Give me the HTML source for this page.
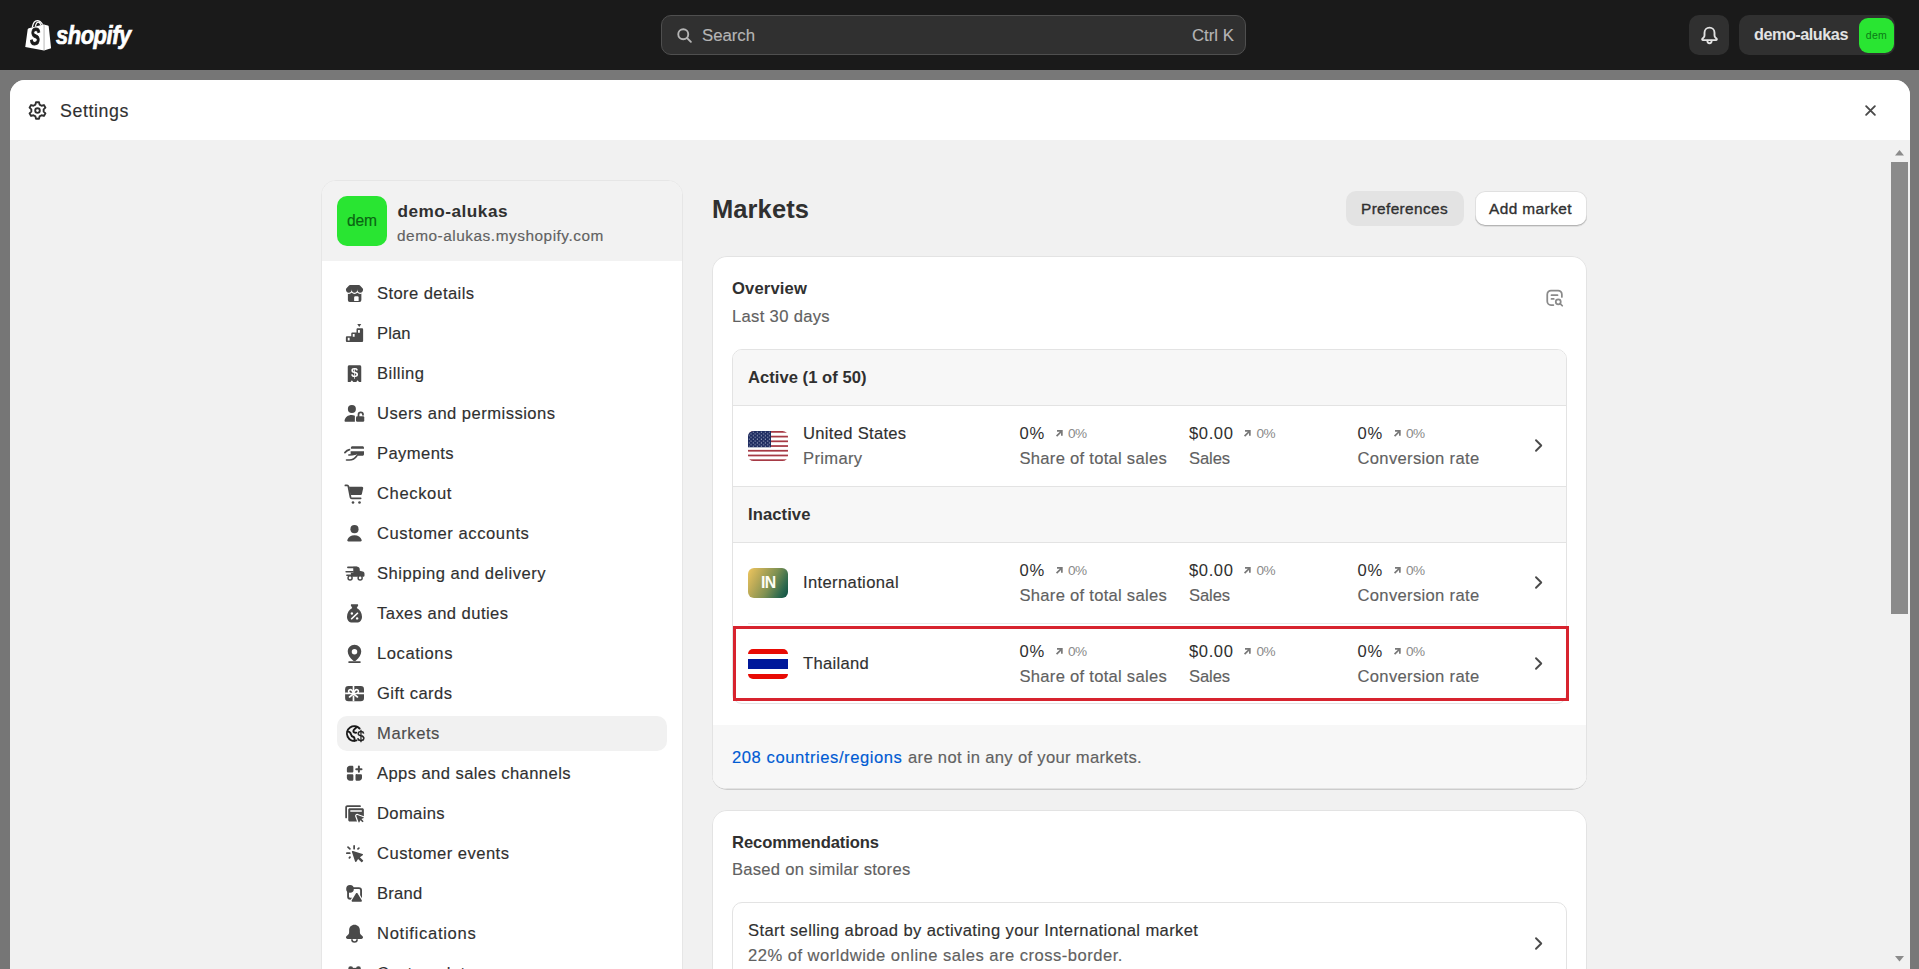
<!DOCTYPE html>
<html lang="en"><head><meta charset="utf-8"><title>Markets · Settings · demo-alukas · Shopify</title>
<style>
html,body{margin:0;padding:0}
body{width:1919px;height:969px;overflow:hidden;position:relative;background:#787878;font-family:"Liberation Sans",sans-serif;-webkit-font-smoothing:antialiased}
.b{position:absolute;box-sizing:border-box}
.t{position:absolute;white-space:nowrap;display:block;margin:0;padding:0;font-weight:400}
svg{position:absolute;display:block;overflow:visible}
a{color:inherit;text-decoration:none}
header,section,nav,main{display:block;margin:0;padding:0}
</style></head>
<body>
<header>
<div class="b" style="left:0px;top:0px;width:1919px;height:70px;background:#1a1a1a"></div>
<div class="b" style="left:0px;top:70px;width:300px;height:10px;background:#767676"></div>
<div class="b" style="left:0px;top:70px;width:10px;height:899px;background:#767676"></div>
<svg viewBox="0 0 28 34" width="28" height="34" style="left:24.500px;top:18.500px;will-change:transform"><path d="M0.250 28.100 L2.700 10.300 C2.800 9.700 3.200 9.300 3.800 9.150 L18.300 5.500 C18.800 5.400 19.300 5.500 19.700 5.800 L22.800 6.400 C23.300 6.500 23.600 6.800 23.700 7.300 L26.100 29.300 L19.050 31.500 Z" fill="#fff"/><path d="M19.050 6.200 V31.400" fill="none" stroke="#9a9a9a" stroke-width=".700"/><path d="M7.300 8.400 C8 4.600 10 1.700 12.200 1.700 C14.400 1.700 16.300 3.300 17.600 5.600" fill="none" stroke="#fff" stroke-width="1.300"/><path d="M10.400 7.600 C10.900 5 12 3.100 13.300 3.100 C14.400 3.100 15.300 4.300 15.900 6.100" fill="none" stroke="#fff" stroke-width="1.200"/><text transform="translate(10.100 26.300) scale(.640 1)" font-size="23" font-weight="700" font-style="italic" text-anchor="middle" fill="#1a1a1a" stroke="#1a1a1a" stroke-width="1" font-family="Liberation Sans,sans-serif">S</text></svg>
<span class="t" style="top:18px;font-size:25px;line-height:35px;color:#fff;left:55.8px;letter-spacing:-0.499px;font-weight:700;font-style:italic;transform:scaleX(0.876);transform-origin:0 0;-webkit-text-stroke:0.7px #fff;">shopify</span>
<div class="b" style="left:661px;top:15px;width:585px;height:40px;background:#303030;border:1px solid #4f4f4f;border-radius:10px"></div>
<svg viewBox="0 0 20 20" width="25" height="25" style="left:671.500px;top:22.500px" fill="none" stroke="#b5b5b5" stroke-width="1.500" stroke-linecap="round"><circle cx="9" cy="9" r="4"/><path d="M12.100 12.100l3 3"/></svg>
<span class="t" style="top:24px;font-size:16.8px;line-height:24px;color:#b5b5b5;left:702px;letter-spacing:-0.039px;-webkit-text-stroke:0.15px #b5b5b5;">Search</span>
<span class="t" style="top:24px;font-size:16.8px;line-height:24px;color:#b5b5b5;left:1192px;letter-spacing:-0.000px;-webkit-text-stroke:0.15px #b5b5b5;">Ctrl K</span>
<div class="b" style="left:1689px;top:15px;width:40px;height:40px;background:#303030;border-radius:10px"></div>
<svg viewBox="0 0 20 20" width="25" height="25" style="left:1696.500px;top:22.500px" fill="none" stroke="#e3e3e3" stroke-width="1.500" stroke-linejoin="round" stroke-linecap="round"><path d="M10 3.700c-2.300 0-4 1.800-4 4.100v2c0 .700-.300 1.400-.800 1.900l-.900.900c-.400.400-.100 1.100.500 1.100h10.400c.600 0 .900-.700.500-1.100l-.900-.900c-.500-.500-.800-1.200-.800-1.900v-2c0-2.300-1.700-4.100-4-4.100z"/><path d="M8.300 14.200c0 1.100.700 2 1.700 2s1.700-.900 1.700-2"/></svg>
<div class="b" style="left:1739px;top:15px;width:156px;height:40px;background:#303030;border-radius:10px"></div>
<span class="t" style="top:23px;font-size:16.2px;line-height:23px;color:#e3e3e3;left:1754px;letter-spacing:-0.458px;font-weight:700;">demo-alukas</span>
<div class="b" style="left:1859px;top:18px;width:35px;height:35px;background:#29e532;border-radius:9px"></div>
<span class="t" style="top:28px;font-size:10.5px;line-height:15px;color:#0c7a16;left:1865.8px;letter-spacing:0.324px;">dem</span>
</header>
<section aria-label="Settings">
<div class="b" style="left:10px;top:80px;width:1900px;height:900px;background:#f1f1f1;border-radius:15px 15px 0 0;overflow:hidden"><div class="b" style="left:0;top:0;width:1900px;height:60px;background:#fff"></div></div>
<svg viewBox="0 0 20 20" width="25" height="25" style="left:24.900px;top:97.900px" fill="none" stroke="#303030" stroke-width="1.500" stroke-linejoin="round"><circle cx="10" cy="10" r="1.850"/><path d="M11.67 5.29 L11.23 3.36 L8.77 3.36 L8.33 5.29 L6.75 6.20 L4.87 5.62 L3.64 7.75 L5.08 9.09 L5.08 10.91 L3.64 12.25 L4.87 14.38 L6.75 13.80 L8.33 14.71 L8.77 16.64 L11.23 16.64 L11.67 14.71 L13.25 13.80 L15.13 14.38 L16.36 12.25 L14.92 10.91 L14.92 9.09 L16.36 7.75 L15.13 5.62 L13.25 6.20Z"/></svg>
<span class="t" style="top:99px;font-size:17.8px;line-height:25px;color:#303030;left:60px;letter-spacing:0.585px;-webkit-text-stroke:0.15px #303030;">Settings</span>
<svg viewBox="0 0 20 20" width="25" height="25" style="left:1858px;top:98px" fill="none" stroke="#4a4a4a" stroke-width="1.500" stroke-linecap="round"><path d="M6.500 6.500l7 7M13.500 6.500l-7 7"/></svg>
<div class="b" style="left:1891px;top:162px;width:17px;height:452px;background:#8b8b8b"></div>
<svg viewBox="0 0 10 6" width="9" height="5.400" style="left:1895px;top:149.800px" fill="#8b8b8b"><path d="M0 6L5 0 10 6z"/></svg>
<svg viewBox="0 0 10 6" width="9" height="5.400" style="left:1895px;top:955.800px" fill="#8b8b8b"><path d="M0 0L5 6 10 0z"/></svg>
<nav aria-label="Settings navigation">
<div class="b" style="left:321px;top:180px;width:362px;height:800px;background:#fff;border:1px solid #e6e6e6;border-radius:15px 15px 0 0;overflow:hidden"><div class="b" style="left:0;top:0;width:360px;height:80px;background:#f2f2f2"></div></div>
<div class="b" style="left:337px;top:196px;width:50px;height:50px;background:#29e532;border-radius:10px"></div>
<span class="t" style="top:210px;font-size:15.6px;line-height:22px;color:#0b6412;left:347px;letter-spacing:-0.116px;-webkit-text-stroke:0.15px #0b6412;">dem</span>
<span class="t" style="top:199px;font-size:17.2px;line-height:24px;color:#303030;left:397.5px;letter-spacing:0.495px;font-weight:700;">demo-alukas</span>
<span class="t" style="top:225px;font-size:15.4px;line-height:22px;color:#616161;left:397px;letter-spacing:0.520px;-webkit-text-stroke:0.15px #616161;">demo-alukas.myshopify.com</span>
<svg viewBox="0 0 20 20" width="25" height="25" style="left:342.0px;top:281.0px" fill="#4a4a4a"><path d="M4.700 8.500h10.800v6.700a1.500 1.500 0 0 1-1.500 1.500h-7.800a1.500 1.500 0 0 1-1.500-1.500z"/><path d="M9.700 16v-2.900a1 1 0 0 1 1-1h1.600a1 1 0 0 1 1 1v2.900z" fill="#fff"/><path stroke="#fff" stroke-width="2" paint-order="stroke" d="M7 3.200h6c.800 0 1.500.400 1.950 1.050l1.650 1.800c.150.250.250.400.250.600a2.283 2.750 0 0 1-4.567 0a2.283 2.750 0 0 1-4.567 0a2.283 2.750 0 0 1-4.567 0c0-.200.100-.350.250-.600l1.650-1.800c.450-.650 1.150-1.050 1.950-1.050z"/></svg>
<a href="#" class="t" style="top:282px;font-size:16.6px;line-height:23px;color:#303030;left:377px;letter-spacing:0.402px;-webkit-text-stroke:0.15px #303030;">Store details</a>
<svg viewBox="0 0 20 20" width="25" height="25" style="left:342.0px;top:321.0px" fill="#4a4a4a"><path d="M12.200 2.300h3.200l-1.600 2.400z"/><path fill-rule="evenodd" d="M12.600 5.700h3.300c.550 0 1 .450 1 1v9c0 .550-.450 1-1 1h-11.800c-.550 0-1-.450-1-1v-2.600c0-.550.450-1 1-1h3.300v-2c0-.550.450-1 1-1h3.200v-2.400c0-.550.450-1 1-1zM4.600 13.300v2.200h1.500v-2.200zM8.600 10.400v2.200h1.500v-2.200zM12.800 7.200v2.200h1.500v-2.200z"/></svg>
<a href="#" class="t" style="top:322px;font-size:16.6px;line-height:23px;color:#303030;left:377px;letter-spacing:0.069px;-webkit-text-stroke:0.15px #303030;">Plan</a>
<svg viewBox="0 0 20 20" width="25" height="25" style="left:342.0px;top:361.0px;will-change:transform" fill="#4a4a4a"><path d="M5.800 3.300h8.400c.660 0 1.200.540 1.200 1.200v11.900c0 .300-.200.450-.450.450h-.900c-.250 0-.450-.100-.600-.300l-.950-1.250-.950 1.250c-.150.200-.350.300-.600.300h-1.500c-.250 0-.450-.100-.600-.300l-.950-1.250-.950 1.250c-.150.200-.350.300-.600.300h-1.300c-.250 0-.450-.150-.450-.450v-11.900c0-.660.540-1.200 1.200-1.200z"/><text x="10" y="12.900" font-size="10.400" font-weight="700" text-anchor="middle" fill="#fff" font-family="Liberation Sans,sans-serif">$</text></svg>
<a href="#" class="t" style="top:362px;font-size:16.6px;line-height:23px;color:#303030;left:377px;letter-spacing:0.458px;-webkit-text-stroke:0.15px #303030;">Billing</a>
<svg viewBox="0 0 20 20" width="25" height="25" style="left:342.0px;top:401.0px" fill="#4a4a4a"><circle cx="7.900" cy="6.300" r="3.200"/><path d="M2.050 15.500c.500-2.600 2.700-4.300 5.600-4.300.950 0 1.850.200 2.650.550v4.850h-7.300c-.650 0-1.100-.500-.950-1.100z"/><rect x="11.200" y="12.100" width="6.600" height="4.500" rx="1"/><path d="M13.200 12.300v-1.400c0-1 .800-1.850 1.800-1.850s1.800.800 1.800 1.800v.200" fill="none" stroke="#4a4a4a" stroke-width="1.400" stroke-linecap="round"/></svg>
<a href="#" class="t" style="top:402px;font-size:16.6px;line-height:23px;color:#303030;left:377px;letter-spacing:0.460px;-webkit-text-stroke:0.15px #303030;">Users and permissions</a>
<svg viewBox="0 0 20 20" width="25" height="25" style="left:342.0px;top:441.0px" fill="#4a4a4a"><path d="M8.300 4.200h8.100c.660 0 1.200.540 1.200 1.200v.800h-10.500v-.800c0-.660.540-1.200 1.200-1.200z"/><path d="M6.900 8.200h10.700v2.400c0 .660-.540 1.200-1.200 1.200h-4.600l.300-1.300h-4.100l-1.100.100z"/><path d="M2.300 9.300c1.100-1.300 2.300-2.100 3.700-2.400" fill="none" stroke="#4a4a4a" stroke-linecap="round" stroke-linejoin="round" stroke-width="1.300"/><path d="M5.500 11.200c2-.100 3.900-.400 5.700-.800" fill="none" stroke="#4a4a4a" stroke-linecap="round" stroke-linejoin="round" stroke-width="1.300"/><path d="M3.600 15.200h2.300c2.700 0 4.500-1.200 6-3.400" fill="none" stroke="#4a4a4a" stroke-linecap="round" stroke-linejoin="round" stroke-width="1.300"/></svg>
<a href="#" class="t" style="top:442px;font-size:16.6px;line-height:23px;color:#303030;left:377px;letter-spacing:0.399px;-webkit-text-stroke:0.15px #303030;">Payments</a>
<svg viewBox="0 0 20 20" width="25" height="25" style="left:342.0px;top:481.0px" fill="#4a4a4a"><path d="M2.700 3.500h1.400c.500 0 .900.350 1 .800l1.700 8.700c.100.450.500.800 1 .800h7.100" fill="none" stroke="#4a4a4a" stroke-linecap="round" stroke-linejoin="round" stroke-width="1.400"/><path d="M5.600 4.600h10.400c.650 0 1.100.600.950 1.200l-1.050 4.500c-.130.530-.600.900-1.150.900h-7.950z"/><circle cx="8.800" cy="17.200" r="1.050"/><circle cx="14" cy="17.200" r="1.050"/></svg>
<a href="#" class="t" style="top:482px;font-size:16.6px;line-height:23px;color:#303030;left:377px;letter-spacing:0.609px;-webkit-text-stroke:0.15px #303030;">Checkout</a>
<svg viewBox="0 0 20 20" width="25" height="25" style="left:342.0px;top:521.0px" fill="#4a4a4a"><circle cx="10" cy="6.500" r="3.250"/><path d="M4.250 15.200c.700-2.300 3-3.800 5.750-3.800s5.050 1.500 5.750 3.800c.180.600-.270 1.100-.900 1.100h-9.700c-.630 0-1.080-.500-.900-1.100z"/></svg>
<a href="#" class="t" style="top:522px;font-size:16.6px;line-height:23px;color:#303030;left:377px;letter-spacing:0.558px;-webkit-text-stroke:0.15px #303030;">Customer accounts</a>
<svg viewBox="0 0 20 20" width="25" height="25" style="left:342.0px;top:561.0px" fill="#4a4a4a"><path d="M9 4.500h3.300c1.100 0 1.900.900 1.900 2v1.200l2.400.700c.850.250 1.400.950 1.400 1.800v1.300c0 .550-.450 1-1 1h-9.900v-3.200h1.900z"/><path d="M4.700 5.100h7M3.300 8.600h5.500M3.900 11.400h3.500" fill="none" stroke="#4a4a4a" stroke-linecap="round" stroke-linejoin="round" stroke-width="1.300"/><circle cx="6.450" cy="13.500" r="2.200"/><circle cx="6.450" cy="13.500" r="1.050" fill="#fff"/><circle cx="14.500" cy="13.500" r="2.200"/><circle cx="14.500" cy="13.500" r="1.050" fill="#fff"/></svg>
<a href="#" class="t" style="top:562px;font-size:16.6px;line-height:23px;color:#303030;left:377px;letter-spacing:0.489px;-webkit-text-stroke:0.15px #303030;">Shipping and delivery</a>
<svg viewBox="0 0 20 20" width="25" height="25" style="left:342.0px;top:601.0px" fill="#4a4a4a"><path d="M7.700 2.600h4.600c.500 0 .800.500.600.950l-1.100 2.100c2.500 1.400 4.200 4 4.200 6.850 0 2.750-1.600 4.700-4.300 4.700h-3.400c-2.700 0-4.300-1.950-4.300-4.700 0-2.850 1.700-5.450 4.200-6.850l-1.100-2.100c-.200-.450.100-.950.600-.950z"/><path d="M7.600 14.300l4.900-4.600" stroke="#fff" stroke-width="1.100" stroke-linecap="round" fill="none"/><circle cx="7.900" cy="10" r=".950" fill="#fff"/><circle cx="12.100" cy="13.900" r=".950" fill="#fff"/></svg>
<a href="#" class="t" style="top:602px;font-size:16.6px;line-height:23px;color:#303030;left:377px;letter-spacing:0.432px;-webkit-text-stroke:0.15px #303030;">Taxes and duties</a>
<svg viewBox="0 0 20 20" width="25" height="25" style="left:342.0px;top:641.0px" fill="#4a4a4a"><path fill-rule="evenodd" d="M10 2.900c3.050 0 5.400 2.400 5.400 5.400 0 2.500-1.700 5.100-4.400 7.400-.600.500-1.400.500-2 0-2.700-2.300-4.400-4.900-4.400-7.400 0-3 2.350-5.400 5.400-5.400zM10 6.300a2.200 2.200 0 1 0 0 4.400 2.200 2.200 0 0 0 0-4.400z"/><path d="M5.700 16.850h8.600" stroke="#4a4a4a" stroke-width="1.500" stroke-linecap="round" fill="none"/></svg>
<a href="#" class="t" style="top:642px;font-size:16.6px;line-height:23px;color:#303030;left:377px;letter-spacing:0.549px;-webkit-text-stroke:0.15px #303030;">Locations</a>
<svg viewBox="0 0 20 20" width="25" height="25" style="left:342.0px;top:681.0px" fill="#4a4a4a"><rect x="2.500" y="4" width="15.100" height="12.100" rx="2.600"/><path d="M2.500 9.850H6.200M12.200 9.850H17.600M9.200 4V8M9.200 11.500V16.100" stroke="#fff" stroke-width="1.350" fill="none"/><path d="M9.200 10C8.600 7.600 7.300 6.600 6.200 7C5.100 7.400 4.900 8.800 6 9.600C6.900 10.200 8.200 10.200 9.200 10ZM9.200 10C9.800 7.600 11.100 6.600 12.200 7C13.300 7.400 13.500 8.800 12.400 9.600C11.500 10.200 10.200 10.200 9.200 10Z" stroke="#fff" stroke-width="1.300" fill="#4a4a4a" stroke-linejoin="round"/><path d="M9.200 10.300l-3.200 2.500M9.200 10.300l3.200 2.500" stroke="#fff" stroke-width="1.300" fill="none" stroke-linecap="round"/></svg>
<a href="#" class="t" style="top:682px;font-size:16.6px;line-height:23px;color:#303030;left:377px;letter-spacing:0.447px;-webkit-text-stroke:0.15px #303030;">Gift cards</a>
<div class="b" style="left:337px;top:716px;width:330px;height:35px;background:#f1f1f1;border-radius:10px"></div>
<svg viewBox="0 0 20 20" width="25" height="25" style="left:342.0px;top:721.0px;will-change:transform" fill="#303030"><path d="M14.080 6.010A5.850 5.850 0 1 0 11.610 15.560" fill="none" stroke="#1a1a1a" stroke-width="1.550" stroke-linecap="round"/><path d="M4.600 8.300c1.400.300 2.300 1 2.500 2.200.200 1.300.900 1.900 2.100 2.300.800.300 1 1.200.800 3" fill="none" stroke="#1a1a1a" stroke-width="1.550" stroke-linecap="round" stroke-linejoin="round"/><path d="M11.800 4.700c-.900 1.300-2.600 2.100-2.700 3.300-.100 1 1 1.500 2.300 1.300" fill="none" stroke="#1a1a1a" stroke-width="1.550" stroke-linecap="round" stroke-linejoin="round"/><text transform="translate(15.050 15.600) scale(.900 1)" font-size="11.600" font-weight="400" text-anchor="middle" fill="#1a1a1a" stroke="#1a1a1a" stroke-width=".300" font-family="Liberation Sans,sans-serif">$</text></svg>
<a href="#" class="t" style="top:722px;font-size:16.6px;line-height:23px;color:#4d4d4d;left:377px;letter-spacing:0.567px;-webkit-text-stroke:0.15px #4d4d4d;">Markets</a>
<svg viewBox="0 0 20 20" width="25" height="25" style="left:342.0px;top:761.0px" fill="#4a4a4a"><path d="M6.300 3.700h1.800c.550 0 1 .450 1 1v3.400c0 .550-.450 1-1 1h-3.200c-.550 0-1-.450-1-1v-2c0-1.330 1.070-2.400 2.400-2.400z"/><path d="M4.900 10.500h3.200c.550 0 1 .450 1 1v3.300c0 .550-.450 1-1 1h-1.800c-1.330 0-2.400-1.070-2.400-2.400v-1.900c0-.550.450-1 1-1z"/><path d="M11.800 10.500h3.200c.550 0 1 .450 1 1v1.900c0 1.330-1.070 2.400-2.400 2.400h-1.800c-.550 0-1-.450-1-1v-3.300c0-.550.450-1 1-1z"/><path d="M13.500 4.400v4.200M11.400 6.500h4.200" stroke="#4a4a4a" stroke-width="1.600" stroke-linecap="round" fill="none"/></svg>
<a href="#" class="t" style="top:762px;font-size:16.6px;line-height:23px;color:#303030;left:377px;letter-spacing:0.410px;-webkit-text-stroke:0.15px #303030;">Apps and sales channels</a>
<svg viewBox="0 0 20 20" width="25" height="25" style="left:342.0px;top:801.0px" fill="#4a4a4a"><path d="M3.300 13.100v-8c0-.550.450-1 1-1h10.100" fill="none" stroke="#4a4a4a" stroke-linecap="round" stroke-linejoin="round" stroke-width="1.400"/><path fill-rule="evenodd" d="M6.200 5.700h10.100c.660 0 1.200.540 1.200 1.200v9.500h-11.300c-.660 0-1.200-.540-1.200-1.200v-8.300c0-.660.540-1.200 1.200-1.200zM7 7.400c-.300 0-.500.250-.500.600s.200.600.500.600h8.500c.300 0 .500-.250.500-.600s-.200-.600-.500-.600z"/><path stroke="#fff" stroke-width="1.900" paint-order="stroke" stroke-linejoin="round" d="M12.250 11.200l5 1.800c.300.100.300.500.050.650l-1.700.800 1.700 1.700-.900.900-1.700-1.700-.800 1.700c-.150.300-.550.250-.650-.050l-1.800-5c-.150-.450.300-.900.800-.800z"/></svg>
<a href="#" class="t" style="top:802px;font-size:16.6px;line-height:23px;color:#303030;left:377px;letter-spacing:0.357px;-webkit-text-stroke:0.15px #303030;">Domains</a>
<svg viewBox="0 0 20 20" width="25" height="25" style="left:342.0px;top:841.0px" fill="#4a4a4a"><path d="M8.850 7.950L16.450 10.450C16.900 10.600 16.950 11.200 16.550 11.450L14.300 12.900L16.800 15.400C17 15.600 17 15.900 16.800 16.100L16.100 16.800C15.900 17 15.600 17 15.400 16.800L12.900 14.300L11.450 16.550C11.200 16.950 10.600 16.900 10.450 16.450L7.950 8.850C7.750 8.250 8.250 7.750 8.850 7.950Z"/><path d="M9.700 3.900v2.200M3.900 9.700h2.300M4.800 4.900l1.500 1.400M13.500 5.700l-.700.600M6.400 12.900l-.500.600" fill="none" stroke="#4a4a4a" stroke-linecap="round" stroke-linejoin="round" stroke-width="1.400"/></svg>
<a href="#" class="t" style="top:842px;font-size:16.6px;line-height:23px;color:#303030;left:377px;letter-spacing:0.468px;-webkit-text-stroke:0.15px #303030;">Customer events</a>
<svg viewBox="0 0 20 20" width="25" height="25" style="left:342.0px;top:881.0px" fill="#4a4a4a"><rect x="4.850" y="5.650" width="10.400" height="8.500" rx="1.800" fill="none" stroke="#4a4a4a" stroke-width="1.500"/><circle cx="6.400" cy="6.300" r="3.050"/><path stroke="#fff" stroke-width="1.900" paint-order="stroke" stroke-linejoin="round" d="M11.100 9.900c.300-.500 1.100-.500 1.400 0l3.300 5.500c.350.550-.050 1.250-.700 1.250h-6.600c-.650 0-1.050-.700-.700-1.250z"/></svg>
<a href="#" class="t" style="top:882px;font-size:16.6px;line-height:23px;color:#303030;left:377px;letter-spacing:0.240px;-webkit-text-stroke:0.15px #303030;">Brand</a>
<svg viewBox="0 0 20 20" width="25" height="25" style="left:342.0px;top:921.0px" fill="#4a4a4a"><path d="M10 3c2.500 0 4.300 1.900 4.300 4.300v1.600c0 .800.300 1.500.850 2.050l1.300 1.300c.800.800.250 2.100-.850 2.100h-11.200c-1.100 0-1.650-1.300-.850-2.100l1.300-1.300c.550-.550.850-1.250.850-2.050v-1.600c0-2.400 1.800-4.300 4.300-4.300z"/><path d="M7.900 14.600c0 1.200.900 2.150 2.100 2.150s2.100-.950 2.100-2.150" fill="none" stroke="#4a4a4a" stroke-width="1.300"/></svg>
<a href="#" class="t" style="top:922px;font-size:16.6px;line-height:23px;color:#303030;left:377px;letter-spacing:0.699px;-webkit-text-stroke:0.15px #303030;">Notifications</a>
<svg viewBox="0 0 20 20" width="25" height="25" style="left:342.0px;top:961.0px" fill="#4a4a4a"><rect x="5" y="4.200" width="3.900" height="5" rx="1.900"/><rect x="11.200" y="4.200" width="3.900" height="5" rx="1.900"/><rect x="8" y="5.500" width="4" height="3.500"/><rect x="5" y="11" width="3.900" height="5" rx="1.900"/><rect x="11.200" y="11" width="3.900" height="5" rx="1.900"/></svg>
<a href="#" class="t" style="top:962px;font-size:16.6px;line-height:23px;color:#303030;left:377px;letter-spacing:0.353px;-webkit-text-stroke:0.15px #303030;">Custom data</a>
</nav>
<main>
<h1 class="t" style="top:191px;font-size:25.5px;line-height:36px;color:#303030;left:712px;letter-spacing:0.087px;font-weight:700;">Markets</h1>
<div class="b" style="left:1346px;top:191px;width:118px;height:35px;background:#e3e3e3;border-radius:10px"></div>
<span class="t" style="top:198px;font-size:15.4px;line-height:22px;color:#303030;left:1361px;letter-spacing:0.361px;-webkit-text-stroke:0.35px #303030;">Preferences</span>
<div class="b" style="left:1475px;top:191px;width:112px;height:35px;background:#fff;border-radius:10px;box-shadow:inset 0 -1px 0 #b5b5b5,inset 0 0 0 1px #e0e0e0,0 1px 0 rgba(0,0,0,.08)"></div>
<span class="t" style="top:198px;font-size:15.4px;line-height:22px;color:#303030;left:1489px;letter-spacing:0.425px;-webkit-text-stroke:0.35px #303030;">Add market</span>
<div class="b" style="left:712px;top:256px;width:875px;height:533px;background:#fff;border-radius:15px;box-shadow:0 1px 0 0 #cccccc,0 0 0 1px #e3e3e3 inset;overflow:hidden"><div class="b" style="left:1px;top:469px;width:873px;height:63px;background:#f7f7f7"></div></div>
<h2 class="t" style="top:277px;font-size:16.6px;line-height:23px;color:#303030;left:732px;letter-spacing:0.147px;font-weight:700;">Overview</h2>
<span class="t" style="top:305px;font-size:16.6px;line-height:23px;color:#616161;left:732px;letter-spacing:0.323px;-webkit-text-stroke:0.15px #616161;">Last 30 days</span>
<svg viewBox="0 0 20 20" width="25" height="25" style="left:1542px;top:285px" fill="none" stroke="#8a8a8a" stroke-width="1.400" stroke-linecap="round" stroke-linejoin="round"><path d="M15.900 9.500V7.500a3 3 0 0 0-3-3H7.200a3 3 0 0 0-3 3V13a3 3 0 0 0 3 3H9.100"/><path d="M7.600 8.100H12.400M7.600 11.100H9.400"/><circle cx="13" cy="13.400" r="2"/><path d="M14.500 14.900l1.700 1.700"/></svg>
<div class="b" style="left:732px;top:349px;width:835px;height:355px;border:1px solid #e3e3e3;border-radius:10px;background:#fff;overflow:hidden"><div class="b" style="left:0;top:0;width:833px;height:56px;background:#f7f7f7;border-bottom:1px solid #e3e3e3"></div><div class="b" style="left:0;top:136px;width:833px;height:57px;background:#f7f7f7;border-top:1px solid #e3e3e3;border-bottom:1px solid #e3e3e3"></div><div class="b" style="left:15px;top:273px;width:803px;height:1px;background:#ebebeb"></div></div>
<span class="t" style="top:366px;font-size:16.6px;line-height:23px;color:#303030;left:748px;letter-spacing:0.026px;font-weight:700;">Active (1 of 50)</span>
<span class="t" style="top:503px;font-size:16.6px;line-height:23px;color:#303030;left:748px;letter-spacing:0.085px;font-weight:700;">Inactive</span>
<svg viewBox="0 0 40 30" width="40" height="30" style="left:748px;top:431px"><defs><clipPath id="fc"><rect width="40" height="30" rx="5.500"/></clipPath><pattern id="st" width="4.100" height="3.600" patternUnits="userSpaceOnUse"><circle cx="1.100" cy=".950" r=".600" fill="#dfe3f3"/><circle cx="3.150" cy="2.750" r=".600" fill="#dfe3f3"/></pattern></defs><g clip-path="url(#fc)"><rect width="40" height="30" fill="#fff"/><rect y="0.000" width="40" height="1.750" fill="#a63a45"/><rect y="4.720" width="40" height="1.750" fill="#a63a45"/><rect y="9.440" width="40" height="1.750" fill="#a63a45"/><rect y="14.160" width="40" height="1.750" fill="#a63a45"/><rect y="18.880" width="40" height="1.750" fill="#a63a45"/><rect y="23.600" width="40" height="1.750" fill="#a63a45"/><rect y="28.320" width="40" height="1.750" fill="#a63a45"/><rect width="23" height="16.300" fill="#1d2b5f"/><rect x=".600" y=".500" width="22" height="15.400" fill="url(#st)"/></g></svg>
<span class="t" style="top:422px;font-size:16.6px;line-height:23px;color:#303030;left:803px;letter-spacing:0.296px;-webkit-text-stroke:0.15px #303030;">United States</span>
<span class="t" style="top:447px;font-size:16.6px;line-height:23px;color:#616161;left:803px;letter-spacing:0.332px;-webkit-text-stroke:0.15px #616161;">Primary</span>
<span class="t" style="top:422px;font-size:16.6px;line-height:23px;color:#303030;left:1019.5px;letter-spacing:0.754px;-webkit-text-stroke:0.01px #303030;">0%</span>
<svg viewBox="0 0 10 10" width="8.800" height="8.800" style="left:1054.8px;top:429.1px" fill="none" stroke="#787878" stroke-width="1.900"><path d="M2.300 2.200h5.500v5.500M7.600 2.400L1.800 8.200"/></svg>
<span class="t" style="top:424px;font-size:13.6px;line-height:19px;color:#8a8a8a;left:1068.0px;letter-spacing:-0.528px;">0%</span>
<span class="t" style="top:447px;font-size:16.6px;line-height:23px;color:#616161;left:1019.5px;letter-spacing:0.270px;-webkit-text-stroke:0.15px #616161;">Share of total sales</span>
<span class="t" style="top:422px;font-size:16.6px;line-height:23px;color:#303030;left:1189px;letter-spacing:0.592px;-webkit-text-stroke:0.01px #303030;">$0.00</span>
<svg viewBox="0 0 10 10" width="8.800" height="8.800" style="left:1243.3px;top:429.1px" fill="none" stroke="#787878" stroke-width="1.900"><path d="M2.300 2.200h5.500v5.500M7.600 2.400L1.800 8.200"/></svg>
<span class="t" style="top:424px;font-size:13.6px;line-height:19px;color:#8a8a8a;left:1256.5px;letter-spacing:-0.528px;">0%</span>
<span class="t" style="top:447px;font-size:16.6px;line-height:23px;color:#616161;left:1189px;letter-spacing:-0.105px;-webkit-text-stroke:0.15px #616161;">Sales</span>
<span class="t" style="top:422px;font-size:16.6px;line-height:23px;color:#303030;left:1357.5px;letter-spacing:0.754px;-webkit-text-stroke:0.01px #303030;">0%</span>
<svg viewBox="0 0 10 10" width="8.800" height="8.800" style="left:1392.8px;top:429.1px" fill="none" stroke="#787878" stroke-width="1.900"><path d="M2.300 2.200h5.500v5.500M7.600 2.400L1.800 8.200"/></svg>
<span class="t" style="top:424px;font-size:13.6px;line-height:19px;color:#8a8a8a;left:1406.0px;letter-spacing:-0.528px;">0%</span>
<span class="t" style="top:447px;font-size:16.6px;line-height:23px;color:#616161;left:1357.5px;letter-spacing:0.321px;-webkit-text-stroke:0.15px #616161;">Conversion rate</span>
<svg viewBox="0 0 20 20" width="25" height="25" style="left:1526px;top:433px" fill="none" stroke="#4a4a4a" stroke-width="1.500" stroke-linecap="round" stroke-linejoin="round"><path d="M8 5.800l4.200 4.200-4.200 4.200"/></svg>
<div class="b" style="left:748px;top:568px;width:40px;height:30px;background:linear-gradient(118deg,#efc65e 0%,#b9a957 28%,#7f9152 55%,#2f6a4e 82%,#0b4f44 100%);border-radius:6px"></div>
<span class="t" style="top:572px;font-size:15.8px;line-height:22px;color:#fdfdf5;left:761px;letter-spacing:-0.750px;font-weight:700;">IN</span>
<span class="t" style="top:571px;font-size:16.6px;line-height:23px;color:#303030;left:803px;letter-spacing:0.356px;-webkit-text-stroke:0.15px #303030;">International</span>
<span class="t" style="top:559px;font-size:16.6px;line-height:23px;color:#303030;left:1019.5px;letter-spacing:0.754px;-webkit-text-stroke:0.01px #303030;">0%</span>
<svg viewBox="0 0 10 10" width="8.800" height="8.800" style="left:1054.8px;top:566.1px" fill="none" stroke="#787878" stroke-width="1.900"><path d="M2.300 2.200h5.500v5.500M7.600 2.400L1.800 8.200"/></svg>
<span class="t" style="top:561px;font-size:13.6px;line-height:19px;color:#8a8a8a;left:1068.0px;letter-spacing:-0.528px;">0%</span>
<span class="t" style="top:584px;font-size:16.6px;line-height:23px;color:#616161;left:1019.5px;letter-spacing:0.270px;-webkit-text-stroke:0.15px #616161;">Share of total sales</span>
<span class="t" style="top:559px;font-size:16.6px;line-height:23px;color:#303030;left:1189px;letter-spacing:0.592px;-webkit-text-stroke:0.01px #303030;">$0.00</span>
<svg viewBox="0 0 10 10" width="8.800" height="8.800" style="left:1243.3px;top:566.1px" fill="none" stroke="#787878" stroke-width="1.900"><path d="M2.300 2.200h5.500v5.500M7.600 2.400L1.800 8.200"/></svg>
<span class="t" style="top:561px;font-size:13.6px;line-height:19px;color:#8a8a8a;left:1256.5px;letter-spacing:-0.528px;">0%</span>
<span class="t" style="top:584px;font-size:16.6px;line-height:23px;color:#616161;left:1189px;letter-spacing:-0.105px;-webkit-text-stroke:0.15px #616161;">Sales</span>
<span class="t" style="top:559px;font-size:16.6px;line-height:23px;color:#303030;left:1357.5px;letter-spacing:0.754px;-webkit-text-stroke:0.01px #303030;">0%</span>
<svg viewBox="0 0 10 10" width="8.800" height="8.800" style="left:1392.8px;top:566.1px" fill="none" stroke="#787878" stroke-width="1.900"><path d="M2.300 2.200h5.500v5.500M7.600 2.400L1.800 8.200"/></svg>
<span class="t" style="top:561px;font-size:13.6px;line-height:19px;color:#8a8a8a;left:1406.0px;letter-spacing:-0.528px;">0%</span>
<span class="t" style="top:584px;font-size:16.6px;line-height:23px;color:#616161;left:1357.5px;letter-spacing:0.321px;-webkit-text-stroke:0.15px #616161;">Conversion rate</span>
<svg viewBox="0 0 20 20" width="25" height="25" style="left:1526px;top:570px" fill="none" stroke="#4a4a4a" stroke-width="1.500" stroke-linecap="round" stroke-linejoin="round"><path d="M8 5.800l4.200 4.200-4.200 4.200"/></svg>
<svg viewBox="0 0 40 30" width="40" height="30" style="left:748px;top:649px"><defs><clipPath id="ft"><rect width="40" height="30" rx="5"/></clipPath></defs><g clip-path="url(#ft)"><rect width="40" height="30" fill="#fff"/><rect width="40" height="5" fill="#e80a04"/><rect y="25" width="40" height="5" fill="#e80a04"/><rect y="10" width="40" height="10" fill="#00189a"/></g></svg>
<span class="t" style="top:652px;font-size:16.6px;line-height:23px;color:#303030;left:803px;letter-spacing:0.290px;-webkit-text-stroke:0.15px #303030;">Thailand</span>
<span class="t" style="top:640px;font-size:16.6px;line-height:23px;color:#303030;left:1019.5px;letter-spacing:0.754px;-webkit-text-stroke:0.01px #303030;">0%</span>
<svg viewBox="0 0 10 10" width="8.800" height="8.800" style="left:1054.8px;top:647.1px" fill="none" stroke="#787878" stroke-width="1.900"><path d="M2.300 2.200h5.500v5.500M7.600 2.400L1.800 8.200"/></svg>
<span class="t" style="top:642px;font-size:13.6px;line-height:19px;color:#8a8a8a;left:1068.0px;letter-spacing:-0.528px;">0%</span>
<span class="t" style="top:665px;font-size:16.6px;line-height:23px;color:#616161;left:1019.5px;letter-spacing:0.270px;-webkit-text-stroke:0.15px #616161;">Share of total sales</span>
<span class="t" style="top:640px;font-size:16.6px;line-height:23px;color:#303030;left:1189px;letter-spacing:0.592px;-webkit-text-stroke:0.01px #303030;">$0.00</span>
<svg viewBox="0 0 10 10" width="8.800" height="8.800" style="left:1243.3px;top:647.1px" fill="none" stroke="#787878" stroke-width="1.900"><path d="M2.300 2.200h5.500v5.500M7.600 2.400L1.800 8.200"/></svg>
<span class="t" style="top:642px;font-size:13.6px;line-height:19px;color:#8a8a8a;left:1256.5px;letter-spacing:-0.528px;">0%</span>
<span class="t" style="top:665px;font-size:16.6px;line-height:23px;color:#616161;left:1189px;letter-spacing:-0.105px;-webkit-text-stroke:0.15px #616161;">Sales</span>
<span class="t" style="top:640px;font-size:16.6px;line-height:23px;color:#303030;left:1357.5px;letter-spacing:0.754px;-webkit-text-stroke:0.01px #303030;">0%</span>
<svg viewBox="0 0 10 10" width="8.800" height="8.800" style="left:1392.8px;top:647.1px" fill="none" stroke="#787878" stroke-width="1.900"><path d="M2.300 2.200h5.500v5.500M7.600 2.400L1.800 8.200"/></svg>
<span class="t" style="top:642px;font-size:13.6px;line-height:19px;color:#8a8a8a;left:1406.0px;letter-spacing:-0.528px;">0%</span>
<span class="t" style="top:665px;font-size:16.6px;line-height:23px;color:#616161;left:1357.5px;letter-spacing:0.321px;-webkit-text-stroke:0.15px #616161;">Conversion rate</span>
<svg viewBox="0 0 20 20" width="25" height="25" style="left:1526px;top:651px" fill="none" stroke="#4a4a4a" stroke-width="1.500" stroke-linecap="round" stroke-linejoin="round"><path d="M8 5.800l4.200 4.200-4.200 4.200"/></svg>
<div class="b" style="left:733px;top:626px;width:836px;height:75px;border:3px solid #d7232e"></div>
<a href="#" class="t" style="top:746px;font-size:16.6px;line-height:23px;color:#005bd3;left:732px;letter-spacing:0.561px;-webkit-text-stroke:0.15px #005bd3;">208 countries/regions</a>
<span class="t" style="top:746px;font-size:16.6px;line-height:23px;color:#616161;left:908px;letter-spacing:0.316px;-webkit-text-stroke:0.15px #616161;">are not in any of your markets.</span>
<div class="b" style="left:712px;top:810px;width:875px;height:200px;background:#fff;border-radius:15px;box-shadow:0 0 0 1px #e3e3e3 inset"></div>
<h2 class="t" style="top:831px;font-size:16.6px;line-height:23px;color:#303030;left:732px;letter-spacing:-0.101px;font-weight:700;">Recommendations</h2>
<span class="t" style="top:858px;font-size:16.6px;line-height:23px;color:#616161;left:732px;letter-spacing:0.260px;-webkit-text-stroke:0.15px #616161;">Based on similar stores</span>
<div class="b" style="left:732px;top:902px;width:835px;height:120px;border:1px solid #e3e3e3;border-radius:10px;background:#fff"></div>
<span class="t" style="top:919px;font-size:16.6px;line-height:23px;color:#303030;left:748px;letter-spacing:0.373px;-webkit-text-stroke:0.15px #303030;">Start selling abroad by activating your International market</span>
<span class="t" style="top:944px;font-size:16.6px;line-height:23px;color:#616161;left:748px;letter-spacing:0.479px;-webkit-text-stroke:0.15px #616161;">22% of worldwide online sales are cross-border.</span>
<svg viewBox="0 0 20 20" width="25" height="25" style="left:1526px;top:930.5px" fill="none" stroke="#4a4a4a" stroke-width="1.500" stroke-linecap="round" stroke-linejoin="round"><path d="M8 5.800l4.200 4.200-4.200 4.200"/></svg>
</main>
</section>
</body></html>
